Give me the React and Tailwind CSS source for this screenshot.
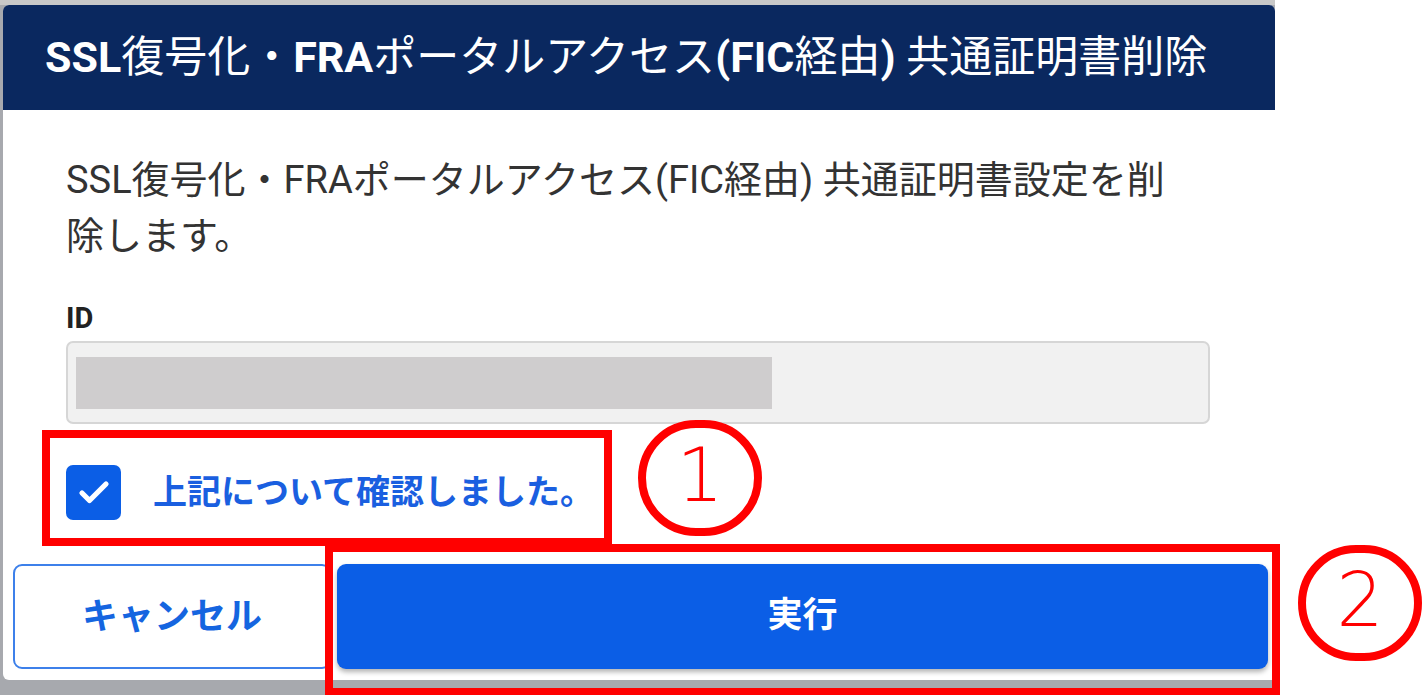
import { Check } from 'lucide-react';

const jp = { fontFamily: 'Roboto, "Noto Sans CJK JP", sans-serif' };
const thin = { fontFamily: '"DejaVu Sans", sans-serif' };

export default function App() {
  return (
    <div className="relative w-[1426px] h-[695px] overflow-hidden bg-white" style={jp}>

      {/* screenshot frame */}
      <div className="w-[1275px] h-[695px] bg-[#a7a9ae] border-t-[5px] border-[#c8c8c8] pl-[3px]">
        <div className="w-[1272px] h-[675px] bg-white rounded-t-[6px] rounded-bl-[6px] flex flex-col overflow-hidden">

          {/* Header */}
          <div className="h-[105px] shrink-0 bg-[#0a285f] flex items-center pl-[42px]">
            <h1 className="text-white text-[43px] font-normal whitespace-nowrap">
              <span className="font-bold">SSL</span>復号化・<span className="font-bold">FRA</span>ポータルアクセス<span className="font-bold">(FIC</span>経由<span className="font-bold">)</span> 共通証明書削除
            </h1>
          </div>

          {/* Body */}
          <div className="flex flex-col px-[63px] pt-[42px]">
            <p className="text-[#333] text-[38px] leading-[56px] w-[1128px]">
              SSL復号化・FRAポータルアクセス(FIC経由) 共通証明書設定を削除します。
            </p>

            <label className="mt-[34px] text-[#222] text-[29px] font-bold leading-[40px]">ID</label>
            <div className="mt-[3px] w-[1144px] h-[83px] bg-[#f1f1f1] border-2 border-[#d6d6d6] rounded-[7px] px-[8px] flex items-center">
              <div className="w-[696px] h-[52px] bg-[#cfcdce]" />
            </div>

            <div className="mt-[41px] flex items-center gap-[32px]">
              <div className="w-[55px] h-[55px] rounded-[7px] bg-[#0b5ee6] flex items-center justify-center">
                <Check className="w-[36px] h-[36px] text-white" strokeWidth={3.5} />
              </div>
              <span className="text-[#1a5fe0] text-[34px] font-bold">上記について確認しました。</span>
            </div>
          </div>

          {/* Buttons */}
          <div className="mt-[44px] flex gap-[6px] pl-[10px] pr-[7px]">
            <button className="w-[318px] h-[105px] bg-white border-2 border-[#3d80ea] rounded-[9px] text-[#1565e0] text-[36px] font-bold">
              キャンセル
            </button>
            <button className="flex-1 h-[105px] bg-[#0b5ee6] rounded-[9px] text-white text-[35px] font-bold shadow-[0_3px_5px_rgba(0,0,0,0.3)]">
              実行
            </button>
          </div>
        </div>
      </div>

      {/* Annotations */}
      <div className="absolute left-[42px] top-[430px] w-[570px] h-[116px] border-[8px] border-[#ff0000]" />
      <div className="absolute left-[638px] top-[420px] w-[124px] h-[116px] border-[8px] border-[#ff0000] rounded-full flex items-center justify-center">
        <span className="text-[#ff0000] text-[74px] font-extralight leading-none -mt-[6px]" style={thin}>1</span>
      </div>
      <div className="absolute left-[325px] top-[544px] w-[955px] h-[152px] border-[8px] border-[#ff0000]" />
      <div className="absolute left-[1298px] top-[545px] w-[124px] h-[116px] border-[8px] border-[#ff0000] rounded-full flex items-center justify-center">
        <span className="text-[#ff0000] text-[74px] font-extralight leading-none -mt-[6px]" style={thin}>2</span>
      </div>
    </div>
  );
}
